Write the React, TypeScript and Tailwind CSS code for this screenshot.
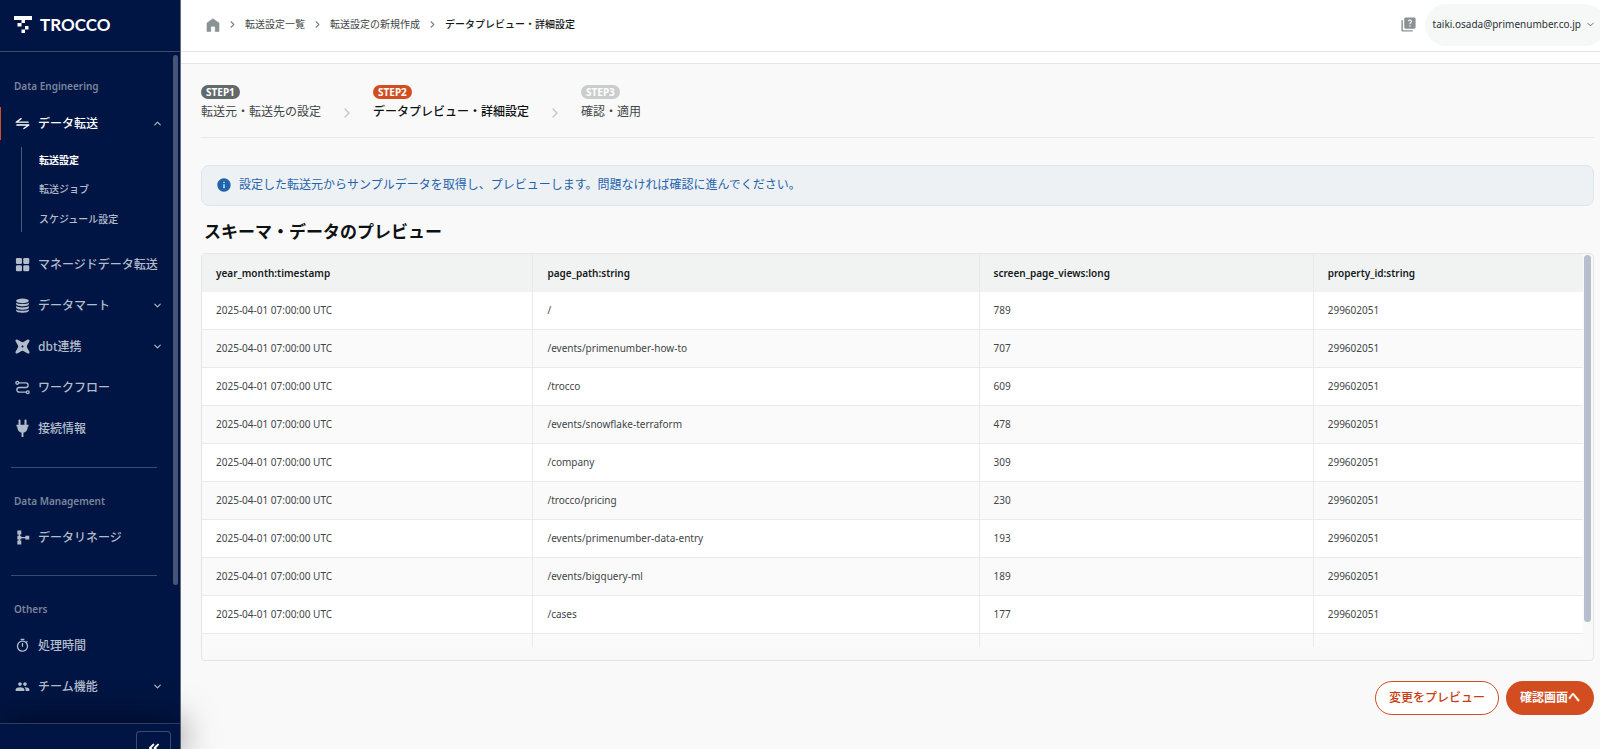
import React from 'react';
import clsx from 'clsx';
import { ChevronDown, ChevronRight, ChevronUp, ChevronsLeft } from 'lucide-react';
import { MdInfo, MdOutlineTimer, MdPeople, MdQuiz } from 'react-icons/md';

type IconType = React.ComponentType<{ className?: string }>;

interface NavItem {
  label: string;
  icon: IconType;
  expandable?: boolean;
}

interface Row {
  yearMonth: string;
  pagePath: string;
  views: string;
  propertyId: string;
}

const LogoMark = () => (
  <svg viewBox="0 0 18 17" className="h-[17px] w-[18px]" fill="currentColor">
    <path d="M0 0h18v4h-7v3H7.5v3.5h-4V7h4V4H0z" />
    <path d="M11 10h3.5v3.5H11V17H7.5v-3.5H11z" />
  </svg>
);

const TransferIcon: IconType = ({ className }) => (
  <svg viewBox="0 0 16 16" className={className} fill="none" stroke="currentColor" strokeWidth="1.4" strokeLinejoin="round" strokeLinecap="round">
    <path d="M6.5 2.8 1.2 6.6H14M9.5 13.4l5.3-3.8H2" />
  </svg>
);

const GridIcon: IconType = ({ className }) => (
  <svg viewBox="0 0 16 16" className={className} fill="currentColor">
    <rect x="1" y="1" width="6.4" height="6.4" rx="1.4" />
    <rect x="8.8" y="1" width="6.4" height="6.4" rx="1.4" />
    <rect x="1" y="8.8" width="6.4" height="6.4" rx="1.4" />
    <rect x="8.8" y="8.8" width="6.4" height="6.4" rx="1.4" />
  </svg>
);

const StackIcon: IconType = ({ className }) => (
  <svg viewBox="0 0 16 16" className={className} fill="currentColor">
    <ellipse cx="8" cy="3" rx="6.8" ry="2.5" />
    <path d="M1.2 5c1.4 2 12.2 2 13.6 0v1.4c0 3.2-13.6 3.2-13.6 0zM1.2 8.6c1.4 2 12.2 2 13.6 0V10c0 3.2-13.6 3.2-13.6 0zM1.2 12.2c1.4 2 12.2 2 13.6 0v1.2c0 3.2-13.6 3.2-13.6 0z" />
  </svg>
);

const DbtIcon: IconType = ({ className }) => (
  <svg viewBox="0 0 16 16" className={className} fill="currentColor" fillRule="evenodd">
    <path d="M2.4.6 6.6 3q1.4.8 2.8 0L13.6.6c1.2-.5 2.3.6 1.8 1.8L13 6.600q-.8 1.400 0 2.800l2.400 4.200c.5 1.200-.6 2.300-1.800 1.800L9.400 13q-1.400-.8-2.800 0l-4.200 2.400c-1.200.5-2.300-.6-1.800-1.800L3 9.400q.8-1.400 0-2.800L.6 2.400C.1 1.200 1.200.1 2.400.6zM8 6.700 6.700 8 8 9.300 9.300 8z" />
  </svg>
);

const WorkflowIcon: IconType = ({ className }) => (
  <svg viewBox="0 0 16 16" className={className} fill="none" stroke="currentColor" strokeWidth="1.4">
    <circle cx="2.4" cy="3" r="1.5" />
    <circle cx="13.600" cy="13" r="1.5" />
    <path d="M4 3h7.500a2.500 2.500 0 0 1 0 5h-7a2.500 2.500 0 0 0 0 5H12" />
  </svg>
);

const PlugIcon: IconType = ({ className }) => (
  <svg viewBox="0 0 16 16" className={className} fill="currentColor">
    <rect x="3.700" y="-1.500" width="2.200" height="6" rx="1" />
    <rect x="10.100" y="-1.500" width="2.200" height="6" rx="1" />
    <path d="M1.500 4h13v1.800h-.9c0 3.900-1.700 6.200-4.600 6.600V17H7v-4.600c-2.900-.4-4.600-2.700-4.600-6.600h-.9z" />
  </svg>
);

const LineageIcon: IconType = ({ className }) => (
  <svg viewBox="0 0 16 16" className={className} fill="currentColor">
    <path d="M2.500.5h4.200v4.200H2.500zM2.500 11.300h4.200v4.200H2.500zM2.500 6h4.200v4.200H2.500zM11 6h4.200v4.200H11z" />
    <path d="M3.900 3h1.400v10H3.900zM5 7.400h7v1.400H5z" />
  </svg>
);

const HomeIcon: IconType = ({ className }) => (
  <svg viewBox="0 0 14 14" className={className} fill="currentColor" stroke="currentColor" strokeWidth=".6" strokeLinejoin="round">
    <path d="M7 .7 13 5v8.500H9.200V9.200a1 1 0 0 0-1-1H5.800a1 1 0 0 0-1 1v4.300H1V5z" />
  </svg>
);

const engineering: NavItem[] = [
  { label: 'マネージドデータ転送', icon: GridIcon },
  { label: 'データマート', icon: StackIcon, expandable: true },
  { label: 'dbt連携', icon: DbtIcon, expandable: true },
  { label: 'ワークフロー', icon: WorkflowIcon },
  { label: '接続情報', icon: PlugIcon },
];

const transferLinks = ['転送設定', '転送ジョブ', 'スケジュール設定'];

const steps = [
  { badge: 'STEP1', label: '転送元・転送先の設定', color: 'bg-[#616a6b]' },
  { badge: 'STEP2', label: 'データプレビュー・詳細設定', color: 'bg-[#d24d20]', current: true },
  { badge: 'STEP3', label: '確認・適用', color: 'bg-[#cacdcd]' },
];

const columns = [
  { name: 'year_month:timestamp', width: 'w-[24%]' },
  { name: 'page_path:string', width: 'w-[32.3%]' },
  { name: 'screen_page_views:long', width: 'w-[24.2%]' },
  { name: 'property_id:string', width: 'w-[19.5%]' },
];

const pages: [string, string][] = [
  ['/', '789'],
  ['/events/primenumber-how-to', '707'],
  ['/trocco', '609'],
  ['/events/snowflake-terraform', '478'],
  ['/company', '309'],
  ['/trocco/pricing', '230'],
  ['/events/primenumber-data-entry', '193'],
  ['/events/bigquery-ml', '189'],
  ['/cases', '177'],
];

const rows: Row[] = pages.map(([pagePath, views]) => ({
  yearMonth: '2025-04-01 07:00:00 UTC',
  pagePath,
  views,
  propertyId: '299602051',
}));

const NavButton = ({ item, active }: { item: NavItem; active?: boolean }) => {
  const Icon = item.icon;
  const Chevron = active ? ChevronUp : ChevronDown;
  return (
    <button
      className={clsx(
        'flex h-[33px] w-full items-center gap-2 border-l pr-[17px] pl-[14px] text-left text-xs font-medium',
        active ? 'border-[#d24d20] text-white' : 'border-transparent text-[#b3bccb]'
      )}
    >
      <Icon className="size-[15px] shrink-0 overflow-visible" />
      <span className="whitespace-nowrap">{item.label}</span>
      {(item.expandable || active) && <Chevron className="ml-auto size-[11px] shrink-0 text-[#b3bccb]" strokeWidth={2.5} />}
    </button>
  );
};

const SectionLabel = ({ children }: { children: React.ReactNode }) => (
  <h2 className="px-[14px] text-[10px] leading-4 font-semibold text-[#7a859c]">{children}</h2>
);

const Divider = () => <hr className="mr-[23px] ml-[11px] border-[#3a4a6c]" />;

const Sidebar = () => (
  <aside className="relative z-10 flex h-screen w-[181px] shrink-0 flex-col border-r border-[#6a6a80] bg-[#001543]">
    <div className="flex h-[52px] shrink-0 items-center gap-2 border-b border-[#3d4a69] px-[14px] pb-0.5 text-white">
      <LogoMark />
      <span className="font-[Lato,sans-serif] text-[17px] font-bold">TROCCO</span>
    </div>

    <nav className="relative min-h-0 flex-1 overflow-hidden pt-[26px]">
      <SectionLabel>Data Engineering</SectionLabel>
      <div className="mt-[13px]">
        <NavButton item={{ label: 'データ転送', icon: TransferIcon }} active />
        <ul className="mt-[7px] mb-4 ml-[21px] flex h-[85px] flex-col justify-between border-l border-[#4a5878] pl-[17px]">
          {transferLinks.map((label, i) => (
            <li key={label} className="flex h-[26px] items-center">
              <a href="#" className={clsx('text-[10px]', i === 0 ? 'font-semibold text-white' : 'font-medium text-[#b3bccb]')}>
                {label}
              </a>
            </li>
          ))}
        </ul>
        <div className="flex flex-col gap-2">
          {engineering.map((item) => (
            <NavButton key={item.label} item={item} />
          ))}
        </div>
      </div>

      <div className="mt-[22px] flex flex-col">
        <Divider />
        <div className="mt-[25px] mb-3">
          <SectionLabel>Data Management</SectionLabel>
        </div>
        <NavButton item={{ label: 'データリネージ', icon: LineageIcon }} />
      </div>

      <div className="mt-[21px] flex flex-col">
        <Divider />
        <div className="mt-[25px] mb-3">
          <SectionLabel>Others</SectionLabel>
        </div>
        <div className="flex flex-col gap-2">
          <NavButton item={{ label: '処理時間', icon: MdOutlineTimer }} />
          <NavButton item={{ label: 'チーム機能', icon: MdPeople, expandable: true }} />
        </div>
      </div>

      <div className="absolute top-[3px] right-0.5 h-[79%] w-[5px] rounded-full bg-[#465575]" />
    </nav>

    <div className="flex h-[26px] shrink-0 justify-end border-t border-[#2b3a5e] bg-[#001543] pt-[7px] pr-[9px] shadow-[0_0_36px_rgba(0,0,0,0.6)]">
      <button aria-label="collapse" className="flex h-[18px] w-[35px] items-start justify-center overflow-hidden rounded-t border border-b-0 border-[#3d4a69] pt-2 text-white">
        <ChevronsLeft className="size-4 shrink-0" strokeWidth={3} />
      </button>
    </div>
  </aside>
);

const Crumb = () => <ChevronRight className="size-[11px] text-[#7b8283]" strokeWidth={2.5} />;

const Header = () => (
  <header className="flex h-[52px] shrink-0 items-center justify-between overflow-hidden border-b border-[#e4e6e6] bg-white pb-0.5 pl-[25px]">
    <nav className="flex items-center gap-[7px] text-[10px] whitespace-nowrap text-[#3f4647]">
      <a href="#" aria-label="home" className="text-[#8b9293]">
        <HomeIcon className="size-[14px]" />
      </a>
      <Crumb />
      <a href="#">転送設定一覧</a>
      <Crumb />
      <a href="#">転送設定の新規作成</a>
      <Crumb />
      <span className="font-medium text-[#15191a]">データプレビュー・詳細設定</span>
    </nav>
    <div className="flex items-center gap-2">
      <button aria-label="help" className="text-[#8b9293]">
        <MdQuiz className="size-[17px]" />
      </button>
      <button className="-mr-1.5 flex h-[42px] items-center gap-1 rounded-full bg-[#f6f8f8] pr-[10px] pl-2 text-[10px] text-[#2b3233]">
        taiki.osada@primenumber.co.jp
        <ChevronDown className="size-[11px] text-[#616a6b]" strokeWidth={2} />
      </button>
    </div>
  </header>
);

const Steps = () => (
  <ol className="flex h-[55px] items-start border-b border-[#e9ebeb]">
    {steps.map((step, i) => (
      <React.Fragment key={step.badge}>
        {i > 0 && (
          <li className="mx-[18px] flex h-[60px] items-center">
            <ChevronRight className="size-4 text-[#c2c6c6]" strokeWidth={2} />
          </li>
        )}
        <li className="flex flex-col items-start pt-0.5">
          <span className={clsx('rounded-full px-[5px] text-[10px] leading-[14px] font-bold text-white', step.color)}>{step.badge}</span>
          <span className={clsx('mt-[3px] text-xs leading-5', step.current ? 'font-medium text-[#0d1112]' : 'text-[#3f4647]')}>{step.label}</span>
        </li>
      </React.Fragment>
    ))}
  </ol>
);

const cell = 'border-r border-[#e9ebeb] px-[14px] last:border-r-0';

const PreviewTable = () => (
  <div className="rounded border border-[#e4e6e6] pb-[13px]">
    <div className="relative h-[393px] overflow-hidden pr-[10px]">
      <table className="w-full table-fixed border-separate border-spacing-0 text-left text-[10px]">
        <thead>
          <tr className="h-[38px] bg-[#f1f3f3] text-[#15191a]">
            {columns.map((col) => (
              <th key={col.name} className={clsx(cell, col.width, 'font-semibold')}>{col.name}</th>
            ))}
          </tr>
        </thead>
        <tbody className="text-[#3f4647]">
          {rows.map((row) => (
            <tr key={row.pagePath} className="h-[38px] bg-white even:bg-[#fafafa]">
              {[row.yearMonth, row.pagePath, row.views, row.propertyId].map((value, i) => (
                <td key={i} className={clsx(cell, 'border-b')}>{value}</td>
              ))}
            </tr>
          ))}
          <tr className="h-[38px] bg-[#fafafa]">
            {columns.map((col) => (
              <td key={col.name} className={cell} />
            ))}
          </tr>
        </tbody>
      </table>
      <div className="absolute top-px right-0.5 h-[367px] w-[7px] rounded-full bg-[#b8becd]" />
    </div>
  </div>
);

export default function App() {
  return (
    <div className="flex min-h-screen bg-[#f9f9f9] font-['Noto_Sans','Noto_Sans_CJK_JP',sans-serif]">
      <Sidebar />
      <div className="flex min-w-0 flex-1 flex-col">
        <Header />
        <div className="h-3 shrink-0 border-b border-[#e4e6e6] bg-white" />
        <main className="flex flex-col pt-[19px] pr-1.5 pl-5">
          <Steps />
          <div className="mt-[27px] flex h-[41px] items-center gap-[7px] rounded-lg border border-[#dbe6f0] bg-[#edf1f4] px-[14px] pb-px text-xs text-[#1f63ad]">
            <MdInfo className="size-4 shrink-0" />
            <p>設定した転送元からサンプルデータを取得し、プレビューします。問題なければ確認に進んでください。</p>
          </div>
          <h1 className="mt-3 mb-[7px] px-[3px] text-[17px] leading-7 font-semibold text-[#0d1112]">スキーマ・データのプレビュー</h1>
          <PreviewTable />
          <div className="mt-5 flex justify-end gap-[7px] text-xs">
            <button className="h-[34px] rounded-full border border-[#d24d20] bg-white px-[13px] font-medium text-[#c93c10]">変更をプレビュー</button>
            <button className="h-[34px] rounded-full bg-[#d24d20] px-[14px] font-bold text-white">確認画面へ</button>
          </div>
        </main>
      </div>
    </div>
  );
}
